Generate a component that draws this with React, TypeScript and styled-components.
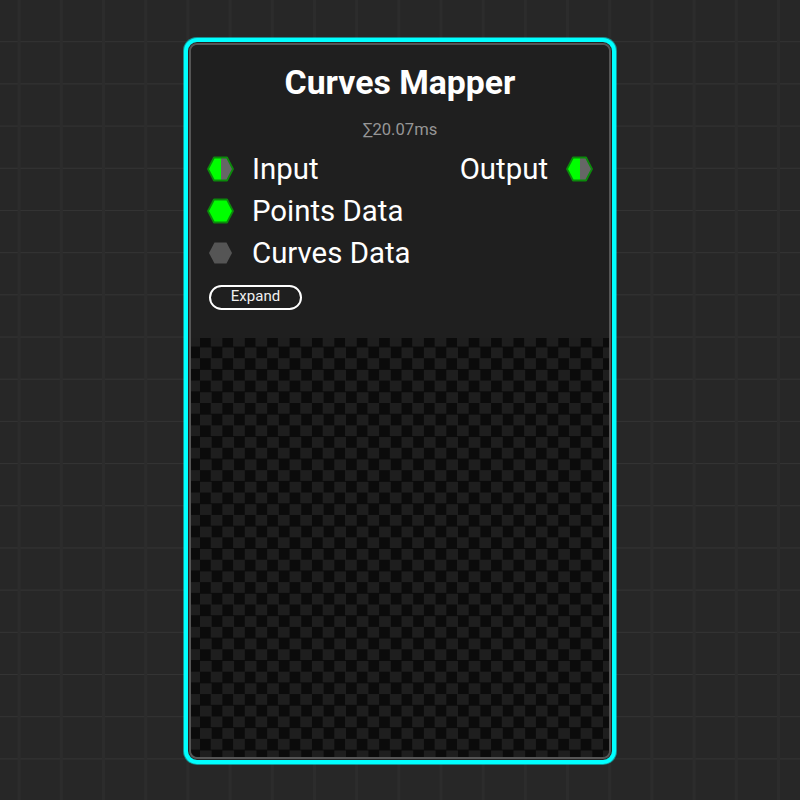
import React from 'react';
import styled, { createGlobalStyle } from 'styled-components';

const GlobalStyle = createGlobalStyle`
    html, body {
        margin: 0;
        padding: 0;
    }

    body {
        background-color: #272727;
        font-family: Roboto, "Liberation Sans", sans-serif;
    }
`;

const Canvas = styled.div`
    width: 800px;
    height: 800px;
    box-sizing: border-box;
    padding-top: 38px;
    display: flex;
    justify-content: center;
    align-items: flex-start;
    overflow: hidden;
    background-color: #272727;
    background-image:
        linear-gradient(to right, transparent 18px, #2c2c2c 18px, #2c2c2c 21px, transparent 21px),
        linear-gradient(to bottom, transparent 41px, #343434 41px, #343434 43px, transparent 43px);
    background-size: 42.2px 42.2px, 42.2px 42.2px;
`;

const Node = styled.div`
    width: 432px;
    height: 726px;
    box-sizing: border-box;
    border: 4px solid #00ffff;
    border-radius: 13px;
    background: #1d1d1d;
    box-shadow:
        0 0 0 1px rgba(0, 255, 255, 0.5),
        inset 0 0 0 1px #222222,
        inset 0 0 0 3px #555555;
    padding: 3px;
    display: flex;
    flex-direction: column;
    overflow: hidden;
`;

const Head = styled.div`
    height: 293px;
    flex-shrink: 0;
    box-sizing: border-box;
    padding: 0 16px;
    background: #1f1f1f;
    border-radius: 7px 7px 0 0;
    display: flex;
    flex-direction: column;
`;

const Title = styled.h1`
    margin: 16px 0 0;
    font-size: 33.8px;
    line-height: 44px;
    font-weight: 700;
    color: #ffffff;
    text-align: center;
`;

const Timing = styled.div`
    margin-top: 15px;
    font-size: 16.6px;
    line-height: 20px;
    color: #969696;
    text-align: center;
`;

const Sockets = styled.div`
    margin-top: 8px;
    display: grid;
    grid-template-columns: 1fr auto;
    grid-auto-rows: 42px;
`;

const Socket = styled.div<{ $side?: 'left' | 'right' }>`
    display: flex;
    align-items: center;
    gap: 18px;
    grid-column: ${(p) => (p.$side === 'right' ? 2 : 1)};
    grid-row: ${(p) => (p.$side === 'right' ? 1 : 'auto')};
    font-size: 29.4px;
    color: #ffffff;
`;

const ExpandButton = styled.button`
    margin: 10.5px 0 0 2px;
    width: 93px;
    height: 25px;
    box-sizing: border-box;
    padding: 0 0 2px;
    appearance: none;
    border: 2px solid #ffffff;
    border-radius: 13px;
    background: transparent;
    color: #f0f0f0;
    font-family: Roboto, "Liberation Sans", sans-serif;
    font-size: 15px;
`;

const Preview = styled.div`
    flex: 1;
    border-radius: 0 0 7px 7px;
    background-color: #0b0b0b;
    background-image: conic-gradient(
        #1e1e1e 25%,
        transparent 25% 50%,
        #1e1e1e 50% 75%,
        transparent 75%
    );
    background-size: 22.4px 22.4px;
    background-position: 9px -2.2px;
`;

const HEX = '7,1.5 20,1.5 26,13 20,24.5 7,24.5 1,13';
const HEX_SMALL = '7.5,2.5 19.5,2.5 25,13 19.5,23.5 7.5,23.5 2,13';

const HexShape = styled.svg`
    flex-shrink: 0;
`;

const Hex = ({ kind }: { kind: 'half' | 'full' | 'empty' }) => (
    <HexShape width="27" height="26" viewBox="0 0 27 26">
        {kind === 'empty' && <polygon points={HEX_SMALL} fill="#555555" />}
        {kind === 'full' && <polygon points={HEX} fill="#00ff00" />}
        {kind === 'half' && (
            <>
                <polygon points={HEX} fill="#666666" />
                <polygon points="7,1.5 14,1.5 14,24.5 7,24.5 1,13" fill="#00ff00" />
            </>
        )}
        {kind !== 'empty' && (
            <polygon
                points={HEX}
                fill="none"
                stroke="#0b8a0b"
                strokeWidth="1.8"
                strokeLinejoin="round"
            />
        )}
    </HexShape>
);

export default function App() {
    return (
        <>
            <GlobalStyle />
            <Canvas>
                <Node>
                    <Head>
                        <Title>Curves Mapper</Title>
                        <Timing>∑20.07ms</Timing>
                        <Sockets>
                            <Socket>
                                <Hex kind="half" />
                                Input
                            </Socket>
                            <Socket $side="right">
                                Output
                                <Hex kind="half" />
                            </Socket>
                            <Socket>
                                <Hex kind="full" />
                                Points Data
                            </Socket>
                            <Socket>
                                <Hex kind="empty" />
                                Curves Data
                            </Socket>
                        </Sockets>
                        <div>
                            <ExpandButton>Expand</ExpandButton>
                        </div>
                    </Head>
                    <Preview />
                </Node>
            </Canvas>
        </>
    );
}
